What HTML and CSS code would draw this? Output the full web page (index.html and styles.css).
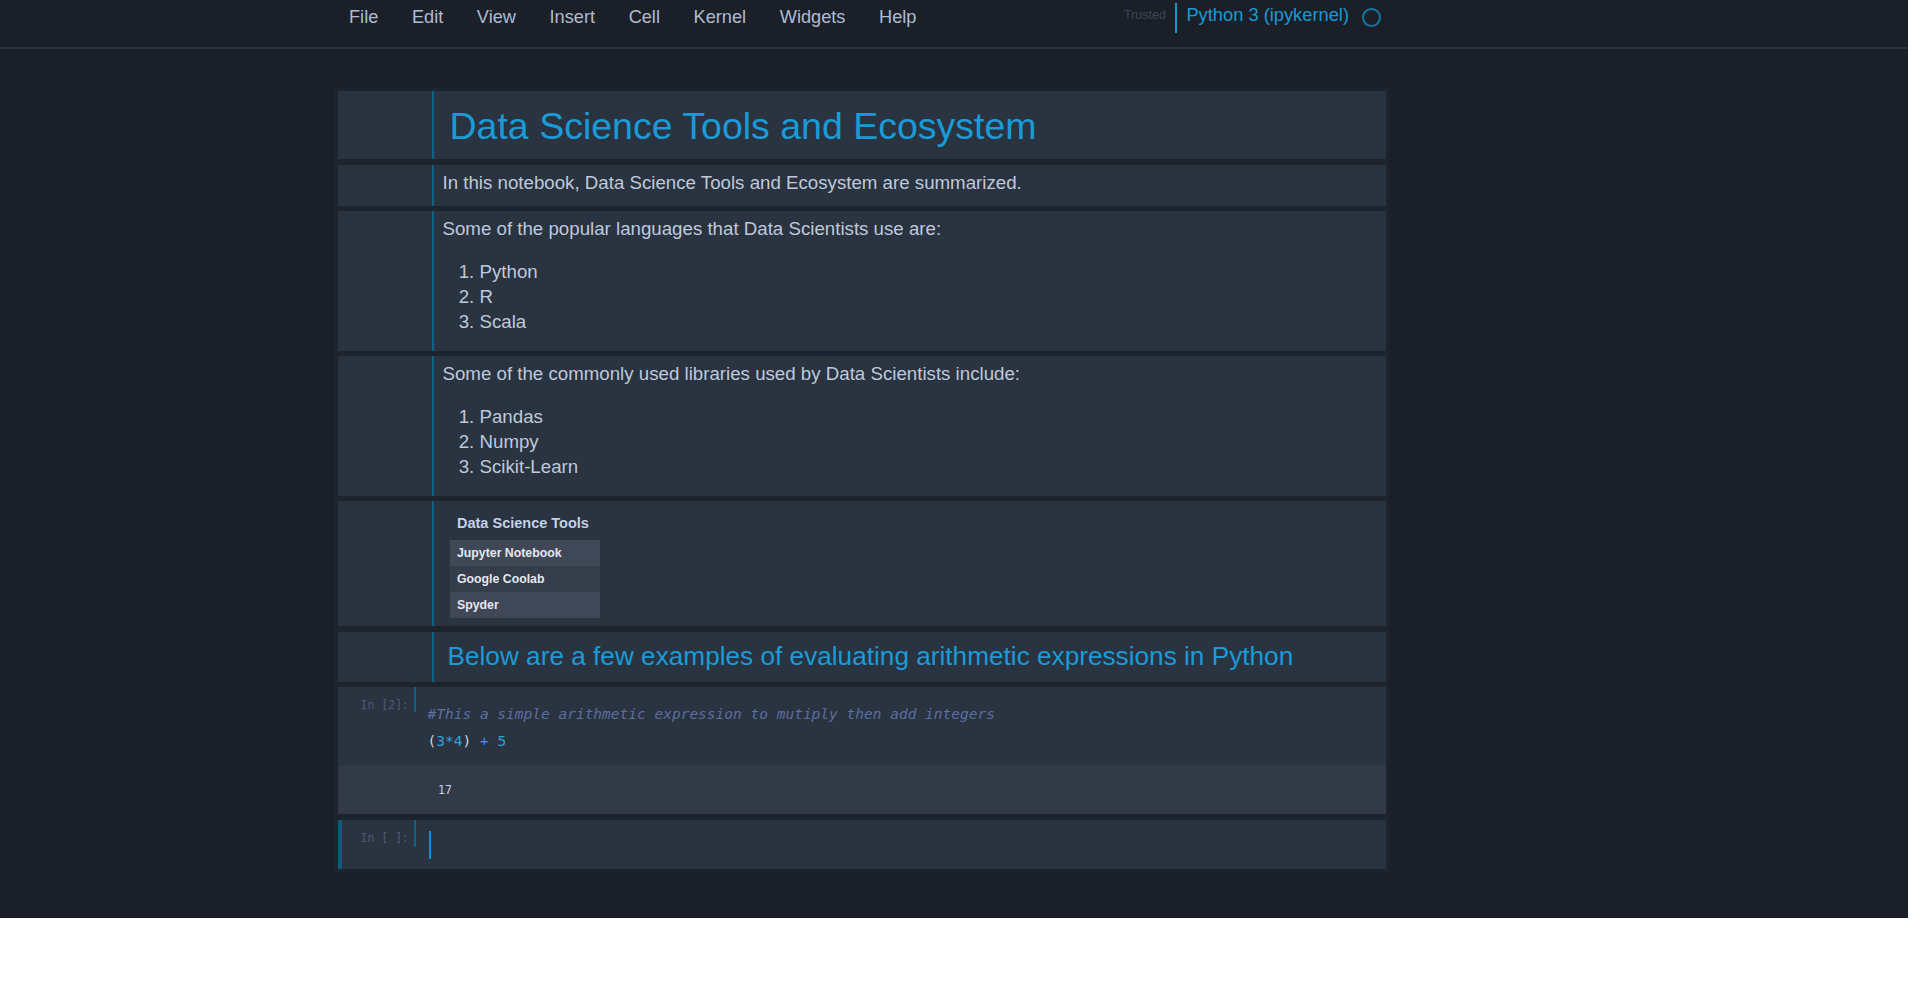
FILE: index.html
```html
<!DOCTYPE html>
<html lang="en">
<head>
<meta charset="utf-8">
<title>Data Science Tools and Ecosystem</title>
<link rel="stylesheet" href="styles.css">
</head>
<body>
<div class="page">
  <header class="topbar">
    <div class="topbar-inner">
      <nav class="menu">
        <span>File</span>
        <span>Edit</span>
        <span>View</span>
        <span>Insert</span>
        <span>Cell</span>
        <span>Kernel</span>
        <span>Widgets</span>
        <span>Help</span>
      </nav>
      <div class="kernel">
        <span class="trusted">Trusted</span>
        <span class="kernel-divider"></span>
        <span class="kernel-name">Python 3 (ipykernel)</span>
        <span class="kernel-status"></span>
      </div>
    </div>
  </header>

  <main class="notebook">
    <section class="cell">
      <div class="prompt"></div>
      <div class="md-body">
        <h1 class="title">Data Science Tools and Ecosystem</h1>
      </div>
    </section>

    <section class="cell">
      <div class="prompt"></div>
      <div class="md-body">
        <p>In this notebook, Data Science Tools and Ecosystem are summarized.</p>
      </div>
    </section>

    <section class="cell">
      <div class="prompt"></div>
      <div class="md-body">
        <p class="lead">Some of the popular languages that Data Scientists use are:</p>
        <ol>
          <li>Python</li>
          <li>R</li>
          <li>Scala</li>
        </ol>
      </div>
    </section>

    <section class="cell">
      <div class="prompt"></div>
      <div class="md-body">
        <p class="lead">Some of the commonly used libraries used by Data Scientists include:</p>
        <ol>
          <li>Pandas</li>
          <li>Numpy</li>
          <li>Scikit-Learn</li>
        </ol>
      </div>
    </section>

    <section class="cell">
      <div class="prompt"></div>
      <div class="md-body md-body--table">
        <table class="tools">
          <caption>Data Science Tools</caption>
          <tbody>
            <tr><td>Jupyter Notebook</td></tr>
            <tr><td>Google Coolab</td></tr>
            <tr><td>Spyder</td></tr>
          </tbody>
        </table>
      </div>
    </section>

    <section class="cell">
      <div class="prompt"></div>
      <div class="md-body">
        <h2 class="subtitle">Below are a few examples of evaluating arithmetic expressions in Python</h2>
      </div>
    </section>

    <section class="cell code-cell">
      <div class="input">
        <div class="prompt-in">In [2]:</div>
        <div class="code"><span class="c-comment">#This a simple arithmetic expression to mutiply then add integers</span>
<span class="c-paren">(</span><span class="c-num">3</span><span class="c-op">*</span><span class="c-num">4</span><span class="c-paren">)</span> <span class="c-plus">+</span> <span class="c-num">5</span></div>
      </div>
      <div class="output">17</div>
    </section>

    <section class="cell code-cell cell--selected">
      <div class="input">
        <div class="prompt-in prompt-in--selected">In [ ]:</div>
        <div class="code code--editing"><span class="cursor"></span></div>
      </div>
    </section>
  </main>
</div>
</body>
</html>
```

FILE: styles.css
```css
* {
  box-sizing: border-box;
}

html,
body {
  margin: 0;
  background: #ffffff;
}

body {
  font-family: "Liberation Sans", Arial, sans-serif;
}

.page {
  width: calc(100% - 12px);
  background: #1b2028;
  padding-bottom: 46.5px;
  overflow: hidden;
}

/* ---------- top bar ---------- */
.topbar {
  height: 49px;
  border-bottom: 2px solid #2a313b;
}

.topbar-inner {
  margin-left: 335px;
  width: 1054px;
  height: 100%;
  display: flex;
}

.menu {
  display: flex;
  gap: 33.6px;
  padding-left: 14px;
  padding-top: 6px;
  font-size: 18.2px;
  line-height: 22px;
  color: #afbbd3;
}

.kernel {
  margin-left: auto;
  display: flex;
  align-items: flex-start;
  padding-right: 8px;
}

.trusted {
  font-size: 12.5px;
  line-height: 16px;
  color: #3b4658;
  margin-top: 7px;
}

.kernel-divider {
  width: 2px;
  height: 30px;
  background: #1493cc;
  margin: 3px 9px 0 9.5px;
}

.kernel-name {
  font-size: 18.3px;
  line-height: 22px;
  color: #169ad5;
  margin-top: 4px;
}

.kernel-status {
  width: 19px;
  height: 19px;
  border: 2px solid #0c78a4;
  border-radius: 50%;
  margin: 8px 0 0 13px;
}

/* ---------- notebook ---------- */
.notebook {
  margin: 39px 0 0 335px;
  width: 1054px;
  padding: 3px;
  background: #1e242d;
  display: flex;
  flex-direction: column;
  gap: 5.5px;
}

.cell {
  background: #2a3340;
  display: flex;
}

.prompt {
  width: 94px;
  flex: none;
}

.md-body {
  flex: 1;
  border-left: 2px solid #0e6286;
  padding: 5px 8px 11px 8.5px;
  color: #bfc9dc;
  font-size: 18.7px;
  line-height: 25px;
}

.md-body p {
  margin: 0;
}

.md-body .lead {
  margin-bottom: 17.5px;
}

.md-body ol {
  margin: 0 0 6px;
  padding-left: 37px;
}

.title {
  margin: 9px 0 0.5px;
  padding-left: 7px;
  font-size: 37.5px;
  line-height: 42.5px;
  font-weight: normal;
  color: #1a9bd7;
}

.subtitle {
  margin: 4px 0 0;
  padding-left: 5px;
  font-size: 26.2px;
  line-height: 30px;
  font-weight: normal;
  color: #1a9bd7;
}

/* ---------- table ---------- */
.md-body--table {
  padding-bottom: 8px;
  padding-left: 6px;
}

.tools {
  border-collapse: collapse;
  margin-left: 10px;
  width: 150px;
}

.tools caption {
  text-align: left;
  padding: 7px 7px;
  font-weight: bold;
  font-size: 14.5px;
  line-height: 20px;
  color: #c6d1e6;
}

.tools td {
  height: 26px;
  padding: 0 7px;
  font-size: 12.3px;
  font-weight: bold;
  line-height: 26px;
  color: #e3e8f2;
  background: #404857;
}

.tools tr:nth-child(even) td {
  background: #363d4a;
}

/* ---------- code cells ---------- */
.code-cell {
  flex-direction: column;
}

.input {
  display: flex;
}

.prompt-in {
  width: 78px;
  flex: none;
  height: 25px;
  border-right: 2px solid #0e6286;
  padding: 11px 5px 0 0;
  text-align: right;
  font-family: "DejaVu Sans Mono", monospace;
  font-size: 11.5px;
  line-height: 14px;
  color: #4e5c78;
  white-space: pre;
}

.code {
  flex: 1;
  padding: 13.5px 0 10.5px 11.5px;
  font-family: "DejaVu Sans Mono", monospace;
  font-size: 14.5px;
  line-height: 27px;
  color: #c8d3e6;
  white-space: pre;
}

.c-comment {
  font-style: italic;
  color: #5b6fa0;
}

.c-paren {
  color: #c8d3e6;
}

.c-num {
  color: #2fa3da;
}

.c-op {
  color: #2fa3da;
}

.c-plus {
  color: #14a2ee;
}

.output {
  background: #323a47;
  padding: 18px 0 17px 100px;
  font-family: "DejaVu Sans Mono", monospace;
  font-size: 11.5px;
  line-height: 14px;
  color: #c8d0e0;
}

.cell--selected {
  border-left: 4px solid #0b5d7e;
}

.prompt-in--selected {
  width: 74px;
  height: 27px;
}

.code--editing {
  padding: 11px 0 10px 13px;
  line-height: 28px;
}

.cursor {
  display: block;
  width: 2px;
  height: 28px;
  background: #0f8fd6;
}
```
